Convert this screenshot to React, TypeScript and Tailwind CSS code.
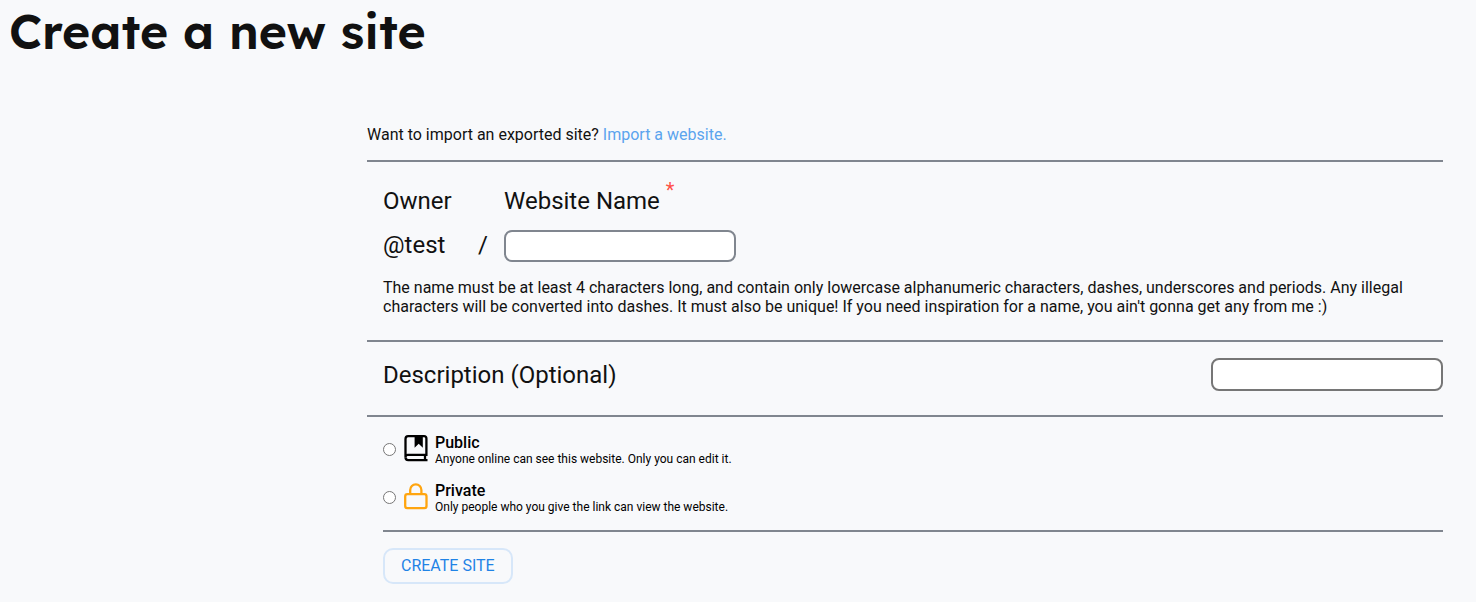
import { useState } from "react";

function BookIcon() {
  return (
    <svg width="24" height="28" viewBox="0 0 24 28" fill="none" stroke="#000000" aria-hidden="true">
      <path d="M22.4 19.8H3.8C2.3 19.8 1.5 20.9 1.5 22.3V4C1.5 2.2 2.3 1.2 4.1 1.2h15.9c1.6 0 2.4.8 2.4 2.4v16.2Z" strokeWidth="2.3" />
      <path d="M1.5 22.3c0 1.9.9 2.9 2.7 2.9h19.3M21 19.8v5" strokeWidth="2.3" />
      <path d="M10.6 1.5h8.2v11.2l-4.1-3.9-4.1 3.9Z" fill="#000000" stroke="none" />
    </svg>
  );
}

function LockIcon() {
  return (
    <svg width="24" height="28" viewBox="0 0 24 28" fill="none" stroke="#ffa50f" strokeWidth="2.3" aria-hidden="true">
      <rect x="1.2" y="11.2" width="21.3" height="14" rx="2.2" />
      <path d="M6.2 11V6.9a5.6 5.6 0 0 1 11.2 0V11" />
    </svg>
  );
}

const options = [
  { id: "public", title: "Public", text: "Anyone online can see this website. Only you can edit it.", Icon: BookIcon },
  { id: "private", title: "Private", text: "Only people who you give the link can view the website.", Icon: LockIcon },
];

export default function App() {
  const [name, setName] = useState("");
  const [description, setDescription] = useState("");
  const [visibility, setVisibility] = useState("");

  return (
    <div className="min-h-screen bg-[#f8f9fb] font-['Roboto',sans-serif] text-base text-[#111111]">
      <h1 className="px-[9px] pt-px font-['Lexend','Inter',sans-serif] text-5xl leading-[60px] font-semibold">
        Create a new site
      </h1>
      <form className="mt-16 mr-[33px] ml-[367px]" onSubmit={(e) => e.preventDefault()}>
        <p className="pb-[15px] leading-5">
          Want to import an exported site?{" "}
          <a href="#import" className="text-[#5ba4ee]">Import a website.</a>
        </p>
        <section className="border-t-2 border-[#80868f] pt-5 pb-6 pl-4">
          <div className="grid grid-cols-[88px_33px_1fr] text-2xl">
            <span className="col-span-2 leading-[38px]">Owner</span>
            <label htmlFor="name" className="flex gap-1.5 leading-[38px]">
              Website Name <span className="text-xl leading-4 text-[#ff5148]">*</span>
            </label>
            <span className="leading-[50px]">@test</span>
            <span className="pl-[7px] leading-[50px]">/</span>
            <input
              id="name"
              type="text"
              required
              value={name}
              onChange={(e) => setName(e.target.value)}
              className="mt-[10px] h-8 w-[232px] rounded-lg border-2 border-[#80868f] bg-white px-2 text-base"
            />
          </div>
          <p className="mt-2 leading-[19px]">
            The name must be at least 4 characters long, and contain only lowercase alphanumeric characters, dashes,
            underscores and periods. Any illegal characters will be converted into dashes. It must also be unique! If you
            need inspiration for a name, you ain't gonna get any from me :)
          </p>
        </section>
        <section className="flex items-start justify-between border-t-2 border-[#80868f] pt-4 pb-[23px] pl-4">
          <label htmlFor="description" className="text-2xl leading-[34px]">Description (Optional)</label>
          <input
            id="description"
            type="text"
            value={description}
            onChange={(e) => setDescription(e.target.value)}
            className="h-[33px] w-[232px] rounded-lg border-2 border-[#767676] bg-white px-2"
          />
        </section>
        <fieldset className="border-t-2 border-[#80868f] pt-2 pb-[9px] pl-4">
          {options.map(({ id, title, text, Icon }) => (
            <label key={id} htmlFor={id} className="flex h-12 items-center text-black">
              <input
                id={id}
                type="radio"
                name="visibility"
                checked={visibility === id}
                onChange={() => setVisibility(id)}
                className="mr-2 size-[13px]"
              />
              <Icon />
              <span className="ml-[7px] flex flex-col pt-0.5">
                <span className="leading-[18px] font-medium">{title}</span>
                <span className="text-xs leading-[14px]">{text}</span>
              </span>
            </label>
          ))}
        </fieldset>
        <div className="ml-4 border-t-2 border-[#80868f] pt-4">
          <button type="submit" className="h-9 rounded-[10px] border-2 border-[#d7e7f9] px-4 text-[#1f83e6]">
            CREATE SITE
          </button>
        </div>
      </form>
    </div>
  );
}
